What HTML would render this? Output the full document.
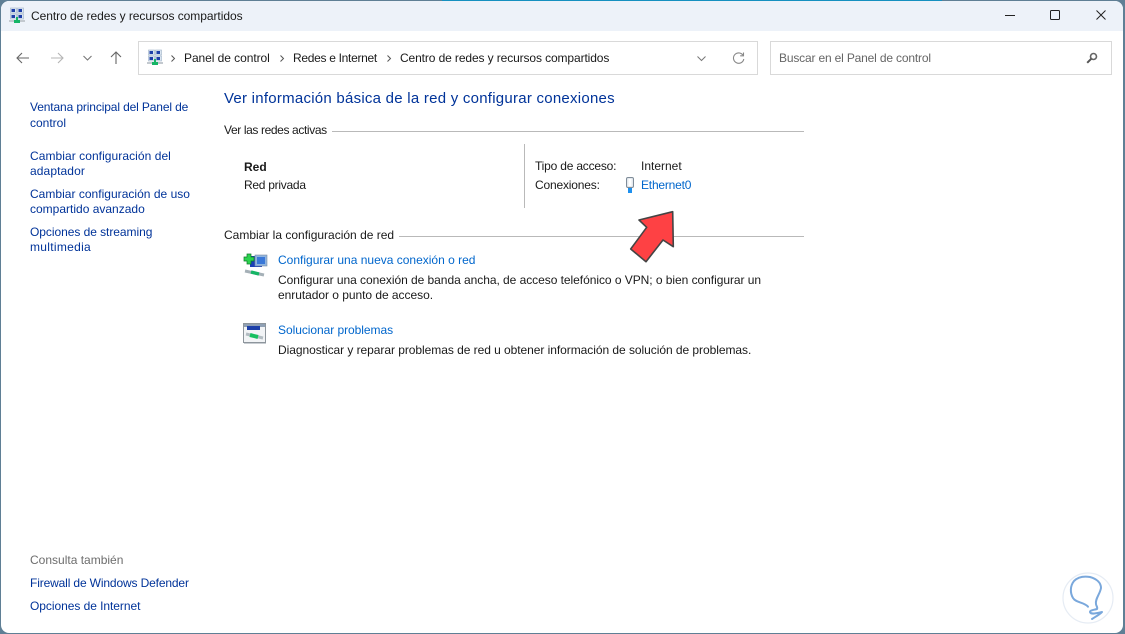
<!DOCTYPE html>
<html><head><meta charset="utf-8">
<style>
html,body{margin:0;padding:0;width:1125px;height:634px;overflow:hidden;background:#5f7f95}
body{font-family:"Liberation Sans",sans-serif;font-size:12px;color:#1a1a1a;position:relative}
.top{position:absolute;left:442px;top:0;width:500px;height:2px;background:#1590c0}
.win{position:absolute;left:1px;top:1px;width:1122px;height:632px;background:#fff;border-radius:8px;overflow:hidden}
.bar{position:absolute;left:0;top:0;width:100%;height:30px;background:#edf2f9}
.t{position:absolute;white-space:nowrap;line-height:15px}
.l{color:#0066cc}
.n{color:#003399}
.box{position:absolute;box-sizing:border-box;border:1px solid #d9d9d9;background:#fff}
.hr{position:absolute;height:1px;background:#b9b9b9}
svg{position:absolute;overflow:visible}
</style></head>
<body>
<div class="top"></div>
<div class="win"><div class="bar"></div></div>

<!-- net icon title -->
<svg style="left:9px;top:7px" width="16" height="17" viewBox="0 0 16 17">
<rect x="1.5" y="1" width="6" height="5" fill="#dbe6f2" stroke="#9fb2c6" stroke-width=".6"/><rect x="8.5" y="1" width="6" height="5" fill="#dbe6f2" stroke="#9fb2c6" stroke-width=".6"/>
<rect x="2.5" y="2" width="3.5" height="3" fill="#1d3fa8"/><rect x="9.5" y="2" width="3.5" height="3" fill="#1d3fa8"/>
<rect x="1.5" y="7" width="6" height="5" fill="#dbe6f2" stroke="#9fb2c6" stroke-width=".6"/><rect x="8.5" y="7" width="6" height="5" fill="#dbe6f2" stroke="#9fb2c6" stroke-width=".6"/>
<rect x="2.5" y="8" width="3.5" height="3" fill="#1d3fa8"/><rect x="9.5" y="8" width="3.5" height="3" fill="#1d3fa8"/>
<rect x="0" y="13" width="16" height="2" fill="#c3c9cf"/>
<rect x="5" y="13" width="6" height="3" fill="#16b566"/><rect x="7" y="10" width="2" height="4" fill="#16b566"/>
</svg>
<div class="t" style="left:31px;top:9px;letter-spacing:-.05px">Centro de redes y recursos compartidos</div>

<!-- window controls -->
<svg style="left:1005px;top:15px" width="10" height="1"><rect width="10" height="1" fill="#222"/></svg>
<svg style="left:1050px;top:10px" width="10" height="10"><rect x=".5" y=".5" width="9" height="9" rx="1" fill="none" stroke="#222"/></svg>
<svg style="left:1096px;top:10px" width="10" height="10"><path d="M.5 .5L9.5 9.5M9.5 .5L.5 9.5" stroke="#222" fill="none"/></svg>

<!-- nav -->
<svg style="left:16px;top:52px" width="14" height="12" viewBox="0 0 14 12"><path d="M13 6H1M6 1L1 6L6 11" stroke="#666" fill="none" stroke-width="1.1"/></svg>
<svg style="left:50px;top:52px" width="14" height="12" viewBox="0 0 14 12"><path d="M1 6H13M8 1L13 6L8 11" stroke="#b5b5b5" fill="none" stroke-width="1.1"/></svg>
<svg style="left:83px;top:55px" width="9" height="6" viewBox="0 0 9 6"><path d="M.5 1L4.5 5L8.5 1" stroke="#777" fill="none" stroke-width="1.1"/></svg>
<svg style="left:110px;top:51px" width="12" height="14" viewBox="0 0 12 14"><path d="M6 13V1M1 6L6 1L11 6" stroke="#666" fill="none" stroke-width="1.1"/></svg>

<div class="box" style="left:138px;top:41px;width:620px;height:34px"></div>
<svg style="left:147px;top:49px" width="16" height="17" viewBox="0 0 16 17">
<rect x="1.5" y="1" width="6" height="5" fill="#dbe6f2" stroke="#9fb2c6" stroke-width=".6"/><rect x="8.5" y="1" width="6" height="5" fill="#dbe6f2" stroke="#9fb2c6" stroke-width=".6"/>
<rect x="2.5" y="2" width="3.5" height="3" fill="#1d3fa8"/><rect x="9.5" y="2" width="3.5" height="3" fill="#1d3fa8"/>
<rect x="1.5" y="7" width="6" height="5" fill="#dbe6f2" stroke="#9fb2c6" stroke-width=".6"/><rect x="8.5" y="7" width="6" height="5" fill="#dbe6f2" stroke="#9fb2c6" stroke-width=".6"/>
<rect x="2.5" y="8" width="3.5" height="3" fill="#1d3fa8"/><rect x="9.5" y="8" width="3.5" height="3" fill="#1d3fa8"/>
<rect x="0" y="13" width="16" height="2" fill="#c3c9cf"/>
<rect x="5" y="13" width="6" height="3" fill="#16b566"/><rect x="7" y="10" width="2" height="4" fill="#16b566"/>
</svg>
<svg style="left:171px;top:55px" width="4" height="7"><path d="M.5 .5L3.5 3.5L.5 6.5" stroke="#555" fill="none"/></svg>
<div class="t" style="left:184px;top:51px;letter-spacing:-.06px">Panel de control</div>
<svg style="left:280px;top:55px" width="4" height="7"><path d="M.5 .5L3.5 3.5L.5 6.5" stroke="#555" fill="none"/></svg>
<div class="t" style="left:293px;top:51px;letter-spacing:-.3px">Redes e Internet</div>
<svg style="left:387px;top:55px" width="4" height="7"><path d="M.5 .5L3.5 3.5L.5 6.5" stroke="#555" fill="none"/></svg>
<div class="t" style="left:400px;top:51px;letter-spacing:-.11px">Centro de redes y recursos compartidos</div>
<svg style="left:697px;top:56px" width="9" height="5"><path d="M.5 .5L4.5 4.5L8.5 .5" stroke="#777" fill="none"/></svg>
<svg style="left:732px;top:52px" width="13" height="13" viewBox="0 0 13 13"><path d="M11 3.2A5.2 5.2 0 1 0 11.8 7" stroke="#888" fill="none" stroke-width="1.1"/><path d="M11.5 .5V3.8H8.2" stroke="#888" fill="none" stroke-width="1.1"/></svg>

<div class="box" style="left:770px;top:41px;width:342px;height:34px"></div>
<div class="t" style="left:779px;top:51px;color:#666;letter-spacing:-.17px">Buscar en el Panel de control</div>
<svg style="left:1086px;top:52px" width="12" height="12" viewBox="0 0 12 12"><circle cx="7.5" cy="4.5" r="3" fill="none" stroke="#666" stroke-width="1.6"/><path d="M5.2 6.8L1.2 10.8" stroke="#555" stroke-width="2"/></svg>

<!-- sidebar -->
<div class="t n" style="left:30px;top:100px;letter-spacing:-.13px">Ventana principal del Panel de</div>
<div class="t n" style="left:30px;top:116px">control</div>
<div class="t n" style="left:30px;top:149px;letter-spacing:.06px">Cambiar configuración del</div>
<div class="t n" style="left:30px;top:164px;letter-spacing:.1px">adaptador</div>
<div class="t n" style="left:30px;top:187px;letter-spacing:.02px">Cambiar configuración de uso</div>
<div class="t n" style="left:30px;top:202px">compartido avanzado</div>
<div class="t n" style="left:30px;top:225px;letter-spacing:-.05px">Opciones de streaming</div>
<div class="t n" style="left:30px;top:240px;letter-spacing:.3px">multimedia</div>
<div class="t" style="left:30px;top:553px;color:#6d6d6d">Consulta también</div>
<div class="t n" style="left:30px;top:576px;letter-spacing:-.14px">Firewall de Windows Defender</div>
<div class="t n" style="left:30px;top:599px;letter-spacing:-.05px">Opciones de Internet</div>

<!-- main -->
<div class="t" style="left:224px;top:90px;font-size:15px;line-height:18px;color:#003399;letter-spacing:.25px">Ver información básica de la red y configurar conexiones</div>
<div class="t" style="left:224px;top:123px;letter-spacing:-.38px">Ver las redes activas</div>
<div class="hr" style="left:332px;top:131px;width:472px"></div>
<div class="t" style="left:244px;top:160px;font-weight:bold">Red</div>
<div class="t" style="left:244px;top:178px;letter-spacing:-.27px">Red privada</div>
<div class="hr" style="left:524px;top:144px;width:1px;height:64px"></div>
<div class="t" style="left:535px;top:159px;letter-spacing:-.2px">Tipo de acceso:</div>
<div class="t" style="left:641px;top:159px">Internet</div>
<div class="t" style="left:535px;top:178px;letter-spacing:-.18px">Conexiones:</div>
<svg style="left:625px;top:177px" width="10" height="17" viewBox="0 0 10 17"><rect x="1.5" y=".5" width="7" height="10" rx="1.5" fill="#e4e9ee" stroke="#7f8c99"/><rect x="3.5" y="2" width="3" height="7" fill="#fff"/><rect x="3" y="11" width="4" height="5" fill="#1e90ee"/></svg>
<div class="t l" style="left:641px;top:178px;letter-spacing:-.2px">Ethernet0</div>

<div class="t" style="left:224px;top:228px">Cambiar la configuración de red</div>
<div class="hr" style="left:399px;top:236px;width:405px"></div>

<svg style="left:243px;top:253px" width="26" height="24" viewBox="0 0 26 24">
<rect x="7" y="3" width="12" height="11" fill="#1c3fb8"/><rect x="12" y="2" width="12" height="11" fill="#8fb4e0" stroke="#7d8e9f" stroke-width=".6"/><rect x="14" y="4" width="8" height="7" fill="#3a78d8"/>
<path d="M2 18L21 22" stroke="#a5b0b7" stroke-width="3"/><path d="M8 19L16 21" stroke="#16b566" stroke-width="3.4"/>
<path d="M4 1H8V4H11V8H8V11H4V8H1V4H4Z" fill="#2cd34e" stroke="#0b7a2a" stroke-width=".7"/>
</svg>
<div class="t l" style="left:278px;top:253px">Configurar una nueva conexión o red</div>
<div class="t" style="left:278px;top:273px;letter-spacing:-.045px">Configurar una conexión de banda ancha, de acceso telefónico o VPN; o bien configurar un</div>
<div class="t" style="left:278px;top:288px;letter-spacing:-.04px">enrutador o punto de acceso.</div>

<svg style="left:243px;top:323px" width="24" height="22" viewBox="0 0 24 22">
<rect x=".5" y=".5" width="22" height="19" fill="#f2f4f6" stroke="#8d959c"/><rect x="1" y="1" width="21" height="3" fill="#8fa0b4"/><rect x="4" y="3" width="13" height="4" fill="#1c3fa8"/>
<path d="M3 11L20 15" stroke="#b2bcc2" stroke-width="3"/><path d="M7 12L15 14" stroke="#16c060" stroke-width="4"/>
<rect x="1" y="20" width="22" height="1" fill="#c8cdd2"/>
</svg>
<div class="t l" style="left:278px;top:323px;letter-spacing:-.05px">Solucionar problemas</div>
<div class="t" style="left:278px;top:343px;letter-spacing:-.05px">Diagnosticar y reparar problemas de red u obtener información de solución de problemas.</div>

<!-- red arrow -->
<svg style="left:0;top:0" width="1125" height="634"><path d="M672.7 211.7L639 220L646.7 227.3L630.7 249L646 261.7L663 240L673.3 246.7Z" fill="#fe4144" stroke="#444" stroke-width="1.6" stroke-linejoin="round"/></svg>

<!-- watermark -->
<svg style="left:1062px;top:572px" width="52" height="52" viewBox="0 0 52 52">
<circle cx="26" cy="26" r="25" fill="#fff" stroke="#e6ecf4" stroke-width="1.2"/>
<path d="M26 34.7C22 30 14 31 11 26C8 21 8 14 12 9C16 5 22 4 28 5C35 7 39 11 39 16C38 22 33 27 34 32C34 34 36 35 35 37C32 38 28 38 28 40C29 43 35 41 40 40C37 43 33 45 30 47" fill="none" stroke="#7aa8dc" stroke-width="2" stroke-linecap="round" stroke-linejoin="round"/>
</svg>
</body></html>
